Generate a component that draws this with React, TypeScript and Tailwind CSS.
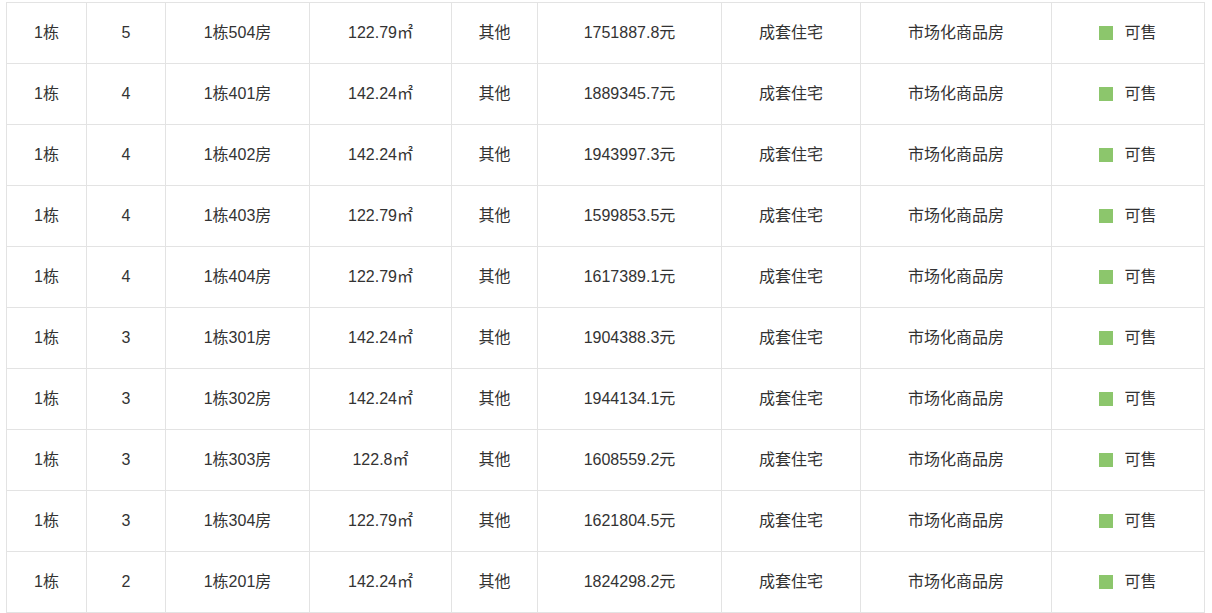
import React from 'react';

type Row = { floor: string; room: string; area: string; price: string };

const rows: Row[] = [
  { floor: '5', room: '1栋504房', area: '122.79㎡', price: '1751887.8元' },
  { floor: '4', room: '1栋401房', area: '142.24㎡', price: '1889345.7元' },
  { floor: '4', room: '1栋402房', area: '142.24㎡', price: '1943997.3元' },
  { floor: '4', room: '1栋403房', area: '122.79㎡', price: '1599853.5元' },
  { floor: '4', room: '1栋404房', area: '122.79㎡', price: '1617389.1元' },
  { floor: '3', room: '1栋301房', area: '142.24㎡', price: '1904388.3元' },
  { floor: '3', room: '1栋302房', area: '142.24㎡', price: '1944134.1元' },
  { floor: '3', room: '1栋303房', area: '122.8㎡', price: '1608559.2元' },
  { floor: '3', room: '1栋304房', area: '122.79㎡', price: '1621804.5元' },
  { floor: '2', room: '1栋201房', area: '142.24㎡', price: '1824298.2元' },
];

const widths = [80, 79, 144, 142, 86, 184, 139, 191, 153];

export default function App() {
  const cell = 'h-[61px] border border-[#e3e3e3] text-center align-middle p-0';

  return (
    <div className="bg-white min-h-[613px] pt-[2px] pl-[6px] text-[16px] text-[#333] font-['Liberation_Sans','Noto_Sans_CJK_SC',sans-serif]">
      <table className="table-fixed border-collapse w-[1199px]">
        <colgroup>
          {widths.map((w, i) => (
            <col key={i} style={{ width: w }} />
          ))}
        </colgroup>
        <tbody>
          {rows.map((r, i) => (
            <tr key={i}>
              <td className={cell}>1栋</td>
              <td className={cell}>{r.floor}</td>
              <td className={cell}>{r.room}</td>
              <td className={cell}>{r.area}</td>
              <td className={cell}>其他</td>
              <td className={cell}>{r.price}</td>
              <td className={cell}>成套住宅</td>
              <td className={cell}>市场化商品房</td>
              <td className={cell}>
                <div className="flex items-center justify-center gap-[11px]">
                  <span className="w-[14px] h-[14px] bg-[#8cc66c]" />
                  <span>可售</span>
                </div>
              </td>
            </tr>
          ))}
        </tbody>
      </table>
    </div>
  );
}
